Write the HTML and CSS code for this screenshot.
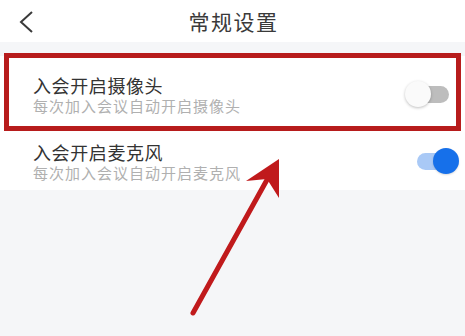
FILE: index.html
```html
<!DOCTYPE html>
<html lang="zh-CN">
<head>
<meta charset="utf-8">
<link rel="stylesheet" href="styles.css">
</head>
<body>
<div class="page">
  <header class="header">
    <div class="back">
      <svg width="16" height="24" viewBox="0 0 16 24"><path d="M14 2 L3 12 L14 22" fill="none" stroke="#3a3a3a" stroke-width="2"/></svg>
    </div>
    <div class="title">常规设置</div>
    <div></div>
  </header>
  <div class="list">
    <div class="row">
      <div class="text">
        <div class="row-title">入会开启摄像头</div>
        <div class="row-sub">每次加入会议自动开启摄像头</div>
      </div>
      <div class="toggle"><span class="track"></span><span class="knob"></span></div>
    </div>
    <div class="row">
      <div class="text">
        <div class="row-title">入会开启麦克风</div>
        <div class="row-sub">每次加入会议自动开启麦克风</div>
      </div>
      <div class="toggle on"><span class="track"></span><span class="knob"></span></div>
    </div>
  </div>
  <div class="highlight"></div>
  <svg class="arrow" width="465" height="336" viewBox="0 0 465 336">
    <line x1="193" y1="313" x2="268" y2="178" stroke="#c01a1c" stroke-width="5" stroke-linecap="round"/>
    <polygon points="279,159 246,181 267,179 279,198" fill="#c01a1c"/>
  </svg>
</div>
</body>
</html>
```
FILE: styles.css
```css
html, body {
  margin: 0;
  padding: 0;
}
body {
  background: #f5f6f8;
  font-family: "Noto Sans CJK SC", "Noto Sans", sans-serif;
  width: 465px;
  height: 336px;
  overflow: hidden;
}
.page {
  position: relative;
  width: 465px;
  height: 336px;
}
.header {
  height: 42px;
  background: #fff;
  display: grid;
  grid-template-columns: 1fr auto 1fr;
  align-items: center;
}
.back {
  padding-left: 18px;
  padding-top: 2px;
  display: flex;
  align-items: center;
}
.title {
  font-size: 21px;
  letter-spacing: 1.5px;
  color: #3a3a3a;
  line-height: 42px;
  padding-left: 2px;
}
.list {
  margin-top: 14px;
  background: #fff;
}
.row {
  height: 67px;
  display: flex;
  align-items: flex-start;
  justify-content: space-between;
  padding-left: 33px;
  padding-right: 6px;
}
.text {
  padding-top: 18px;
}
.row-title {
  font-size: 18px;
  line-height: 22px;
  letter-spacing: 0.6px;
  color: #333;
}
.row-sub {
  font-size: 15px;
  line-height: 19px;
  letter-spacing: 1px;
  color: #b0b0b0;
}
.toggle {
  position: relative;
  width: 54px;
  height: 26px;
  margin-top: 25px;
}
.track {
  position: absolute;
  left: 12px;
  top: 5px;
  width: 32px;
  height: 17px;
  border-radius: 9px;
  background: #bdbdbd;
}
.knob {
  position: absolute;
  left: 0;
  top: 0;
  width: 26px;
  height: 26px;
  border-radius: 50%;
  background: #fafafa;
  box-shadow: 0 1px 3px rgba(0,0,0,0.25);
}
.toggle.on .track {
  background: #a9c9f6;
}
.toggle.on .knob {
  left: 28px;
  background: #1670ea;
  box-shadow: 0 1px 2px rgba(0,0,0,0.15);
}
.highlight {
  position: absolute;
  left: 4px;
  top: 53px;
  width: 447px;
  height: 68px;
  border: 5px solid #b71c1c;
}
.arrow {
  position: absolute;
  left: 0;
  top: 0;
}
```
